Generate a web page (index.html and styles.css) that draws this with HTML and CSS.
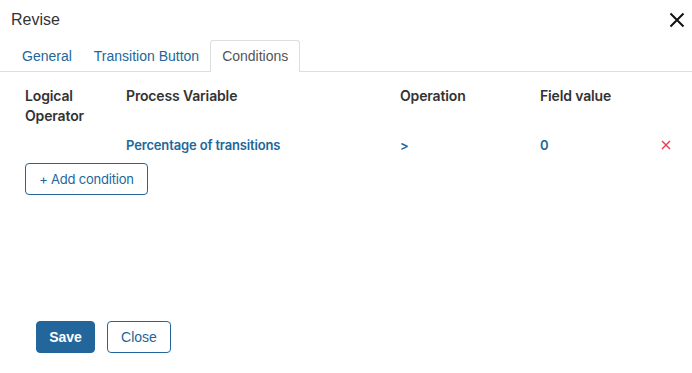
FILE: index.html
```html
<!DOCTYPE html>
<html lang="en">
<head>
  <meta charset="UTF-8">
  <title>Revise</title>
  <meta name="viewport" content="width=device-width, initial-scale=1.0">
  <link rel="stylesheet" href="styles.css">
</head>
<body>
  <div class="dialog">
    <div class="dialog-header">
      <h1 class="dialog-title">Revise</h1>
      <button class="dialog-close" aria-label="Close">
        <svg width="16" height="16" viewBox="0 0 16 16"><path d="M1.5 1.5 L14.5 14.5 M14.5 1.5 L1.5 14.5" stroke="#111" stroke-width="2" fill="none"/></svg>
      </button>
    </div>

    <div class="tabs">
      <a class="tab">General</a>
      <a class="tab">Transition Button</a>
      <a class="tab tab-active">Conditions</a>
    </div>

    <div class="conditions">
      <div class="cond-grid">
        <div class="cond-head">Logical Operator</div>
        <div class="cond-head">Process Variable</div>
        <div class="cond-head">Operation</div>
        <div class="cond-head">Field value</div>
        <div></div>

        <div class="cond-cell"></div>
        <div class="cond-cell link">Percentage of transitions</div>
        <div class="cond-cell link">&gt;</div>
        <div class="cond-cell link">0</div>
        <div class="cond-cell cond-remove">
          <svg width="10" height="10" viewBox="0 0 10 10"><path d="M1 1 L9 9 M9 1 L1 9" stroke="#ec3b4f" stroke-width="1.4" fill="none"/></svg>
        </div>
      </div>
      <button class="btn-outline btn-add">+ Add condition</button>
    </div>

    <div class="dialog-footer">
      <button class="btn-primary">Save</button>
      <button class="btn-outline btn-close">Close</button>
    </div>
  </div>
</body>
</html>
```

FILE: styles.css
```css
body {
  margin: 0;
  background: #fff;
  font-family: "Liberation Sans", Arial, sans-serif;
  color: #333;
}
.dialog {
  height: 373px;
  display: flex;
  flex-direction: column;
}
.dialog-header {
  display: flex;
  justify-content: space-between;
  align-items: center;
  padding: 5px 7px 0 11px;
  height: 30px;
}
.dialog-title {
  margin: 0;
  font-size: 16px;
  font-weight: normal;
  color: #333;
}
.dialog-close {
  border: 0;
  background: none;
  padding: 0;
  display: flex;
}
.tabs {
  display: flex;
  align-items: flex-end;
  margin-top: 5px;
  padding-left: 11px;
  border-bottom: 1px solid #ddd;
  height: 31px;
}
.tab {
  font-size: 14px;
  color: #22669b;
  padding: 0 10px;
  height: 32px;
  line-height: 31px;
  border: 1px solid transparent;
  border-bottom: 0;
  border-radius: 3px 3px 0 0;
  margin-bottom: -1px;
  box-sizing: border-box;
}
.tab-active {
  color: #555;
  background: #fff;
  border-color: #ddd;
  padding: 0 11px;
}
.conditions {
  padding: 14px 21px 0 25px;
}
.cond-grid {
  display: grid;
  grid-template-columns: 101px 274px 140px 1fr 30px;
  font-family: Inter, "Liberation Sans", sans-serif;
  font-size: 14px;
  line-height: 20px;
  letter-spacing: -0.15px;
}
.cond-head {
  font-weight: 600;
  color: #333;
  padding-right: 10px;
}
.cond-cell {
  display: flex;
  align-items: center;
  height: 32px;
  margin-top: 3px;
  font-size: 13px;
}
.cond-remove {
  justify-content: flex-end;
}
.link {
  color: #22669b;
  font-weight: 600;
}
.btn-outline,
.btn-primary {
  font-size: 14px;
  height: 32px;
  border-radius: 4px;
  box-sizing: border-box;
  cursor: pointer;
}
.btn-outline {
  background: #fff;
  border: 1px solid #22669b;
  color: #22669b;
}
.btn-add {
  margin-top: 2px;
  width: 123px;
  font-family: Inter, "Liberation Sans", sans-serif;
  font-size: 13px;
  letter-spacing: -0.2px;
}
.dialog-footer {
  margin-top: auto;
  padding: 0 0 20px 36px;
  display: flex;
  gap: 12px;
}
.btn-primary {
  background: #22669b;
  border: 1px solid #22669b;
  color: #fff;
  font-weight: bold;
  width: 59px;
  font-family: "Liberation Sans", Arial, sans-serif;
}
.btn-close {
  width: 64px;
  font-family: "Liberation Sans", Arial, sans-serif;
}
```
